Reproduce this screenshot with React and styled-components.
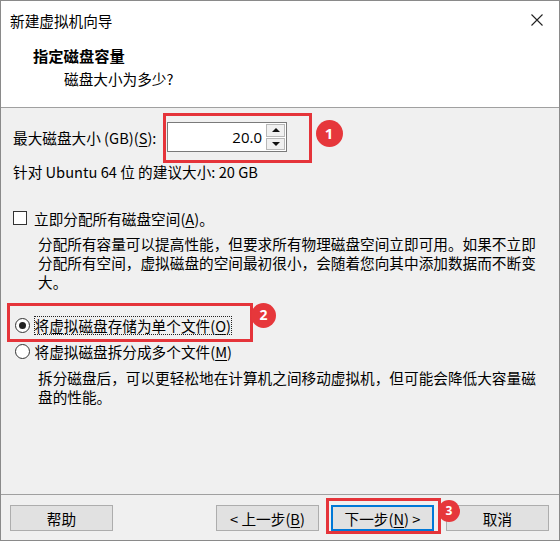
import React from 'react';
import styled, { createGlobalStyle } from 'styled-components';

const GlobalStyle = createGlobalStyle`
  html, body { margin: 0; padding: 0; background: #fff; }
  body {
    font-family: "Noto Sans CJK SC", "Microsoft YaHei", "Noto Sans", sans-serif;
    font-size: 14.65px;
    color: #000;
  }
  * { box-sizing: border-box; }
`;

const Window = styled.div`
  width: 560px;
  height: 541px;
  border: 1px solid #8a8a8a;
  background: #f0f0f0;
  display: flex;
  flex-direction: column;
  overflow: hidden;
`;

const Header = styled.header`
  height: 107px;
  flex-shrink: 0;
  background: #fff;
  border-bottom: 1px solid #a0a0a0;
`;

const TitleBar = styled.div`
  height: 38px;
  display: flex;
  align-items: center;
  justify-content: space-between;
  padding: 0 16px 0 9px;
  line-height: 19px;
`;

const CloseIcon = styled.svg`
  width: 12px;
  height: 12px;
  display: block;
`;

const Heading = styled.div`
  margin-top: 4px;
  padding-left: 32px;
  line-height: 24px;
  font-weight: 700;
  font-size: 15.3px;
`;

const SubHeading = styled.div`
  padding-left: 63px;
  line-height: 24px;
`;

const Body = styled.main`
  flex: 1;
  padding: 14px 0 0 12px;
  line-height: 19px;
`;

const FieldRow = styled.div`
  display: flex;
  align-items: center;
  height: 30px;
`;

const FieldLabel = styled.label`
  width: 154px;
  white-space: nowrap;
`;

const U = styled.span`
  text-decoration: underline;
  text-underline-offset: 2px;
`;

const Marked = styled.div`
  position: relative;
  display: inline-flex;
  align-items: center;
`;

const RedFrame = styled.span`
  position: absolute;
  pointer-events: none;
  left: ${p => p.$l}px;
  top: ${p => p.$t}px;
  width: ${p => p.$w}px;
  height: ${p => p.$h}px;
  border: 3px solid #e5343a;
  z-index: 2;
`;

const Badge = styled.span`
  position: absolute;
  left: ${p => p.$l}px;
  top: ${p => p.$t}px;
  width: ${p => p.$d}px;
  height: ${p => p.$d}px;
  border-radius: 50%;
  background: #e6373b;
  color: #fff;
  font-family: "Open Sans", "Liberation Sans", sans-serif;
  font-weight: 700;
  font-size: ${p => Math.round(p.$d * 0.55)}px;
  display: flex;
  align-items: center;
  justify-content: center;
  line-height: 1;
  z-index: 3;
`;

const SpinBox = styled.div`
  width: 120px;
  height: 30px;
  border: 1px solid #7a7a7a;
  background: #fff;
  display: flex;
`;

const SpinValue = styled.div`
  flex: 1;
  display: flex;
  align-items: center;
  justify-content: flex-end;
  padding-right: 3px;
  font-family: "Open Sans", "Noto Sans", sans-serif;
  font-size: 15px;
`;

const SpinButtons = styled.div`
  width: 21px;
  display: flex;
  flex-direction: column;
  gap: 1px;
  padding: 1px;
`;

const SpinButton = styled.div`
  flex: 1;
  background: #f0f0f0;
  border: 1px solid #b8b8b8;
  display: flex;
  align-items: center;
  justify-content: center;
`;

const Arrow = styled.span`
  width: 0;
  height: 0;
  border-left: 4px solid transparent;
  border-right: 4px solid transparent;
  ${p => (p.$up ? 'border-bottom: 4px solid #111;' : 'border-top: 4px solid #111;')}
`;

const Hint = styled.div`
  margin-top: 9.5px;
`;

const OptionRow = styled.div`
  display: flex;
  align-items: center;
  height: 19px;
  margin-top: ${p => p.$mt}px;
`;

const CheckBox = styled.span`
  width: 14px;
  height: 14px;
  border: 1px solid #333;
  background: #fff;
  margin-right: 7px;
  flex-shrink: 0;
`;

const Radio = styled.span`
  width: 15px;
  height: 15px;
  border-radius: 50%;
  border: 1px solid #333;
  background: #fff;
  margin-left: 1.5px;
  margin-right: 4px;
  flex-shrink: 0;
  display: flex;
  align-items: center;
  justify-content: center;
  &::after {
    content: '';
    width: 7px;
    height: 7px;
    border-radius: 50%;
    background: ${p => (p.$checked ? '#222' : 'transparent')};
  }
`;

const OptionText = styled.span`
  white-space: nowrap;
  padding: 0 1px;
  outline: ${p => (p.$focus ? '1px dotted #222' : 'none')};
  outline-offset: -1px;
`;

const Description = styled.p`
  margin: ${p => p.$mt}px 0 0;
  padding-left: 25px;
  width: 530px;
`;

const Footer = styled.footer`
  flex-shrink: 0;
  border-top: 1px solid #a0a0a0;
  padding: 10px 10px 9px 9px;
  display: flex;
  justify-content: space-between;
`;

const ButtonGroup = styled.div`
  display: flex;
  gap: 12px;
`;

const Button = styled.div`
  width: 103px;
  height: 26px;
  background: #e1e1e1;
  border: ${p => (p.$default ? '2px solid #0078d7' : '1px solid #adadad')};
  display: flex;
  align-items: center;
  justify-content: center;
  line-height: 19px;
  white-space: nowrap;
`;

export default function App() {
  return (
    <>
      <GlobalStyle />
      <Window>
        <Header>
          <TitleBar>
            <span>新建虚拟机向导</span>
            <CloseIcon viewBox="0 0 12 12">
              <path d="M0.5 0.5 L11.5 11.5 M11.5 0.5 L0.5 11.5" stroke="#222" strokeWidth="1.1" fill="none" />
            </CloseIcon>
          </TitleBar>
          <Heading>指定磁盘容量</Heading>
          <SubHeading>磁盘大小为多少?</SubHeading>
        </Header>

        <Body>
          <FieldRow>
            <FieldLabel>最大磁盘大小 (GB)(<U>S</U>):</FieldLabel>
            <Marked>
              <SpinBox>
                <SpinValue>20.0</SpinValue>
                <SpinButtons>
                  <SpinButton><Arrow $up /></SpinButton>
                  <SpinButton><Arrow /></SpinButton>
                </SpinButtons>
              </SpinBox>
              <RedFrame $l={-4} $t={-9} $w={149} $h={50} />
              <Badge $l={148.5} $t={-2.5} $d={27}>1</Badge>
            </Marked>
          </FieldRow>
          <Hint>针对 Ubuntu 64 位 的建议大小: 20 GB</Hint>

          <OptionRow $mt={28}>
            <CheckBox />
            <span>立即分配所有磁盘空间(<U>A</U>)。</span>
          </OptionRow>
          <Description $mt={6}>
            分配所有容量可以提高性能，但要求所有物理磁盘空间立即可用。如果不立即分配所有空间，虚拟磁盘的空间最初很小，会随着您向其中添加数据而不断变<br />大。
          </Description>

          <OptionRow $mt={25}>
            <Marked>
              <Radio $checked />
              <OptionText $focus>将虚拟磁盘存储为单个文件(<U>O</U>)</OptionText>
              <RedFrame $l={-6} $t={-12.5} $w={246} $h={39} />
              <Badge $l={238} $t={-13} $d={25}>2</Badge>
            </Marked>
          </OptionRow>
          <OptionRow $mt={7}>
            <Radio />
            <OptionText>将虚拟磁盘拆分成多个文件(<U>M</U>)</OptionText>
          </OptionRow>
          <Description $mt={7}>
            拆分磁盘后，可以更轻松地在计算机之间移动虚拟机，但可能会降低大容量磁盘的性能。
          </Description>
        </Body>

        <Footer>
          <Button>帮助</Button>
          <ButtonGroup>
            <Button>&lt; 上一步(<U>B</U>)</Button>
            <Marked>
              <Button $default>下一步(<U>N</U>) &gt;</Button>
              <RedFrame $l={-5} $t={-7} $w={115} $h={36} />
              <Badge $l={107} $t={-5} $d={22}>3</Badge>
            </Marked>
            <Button>取消</Button>
          </ButtonGroup>
        </Footer>
      </Window>
    </>
  );
}
